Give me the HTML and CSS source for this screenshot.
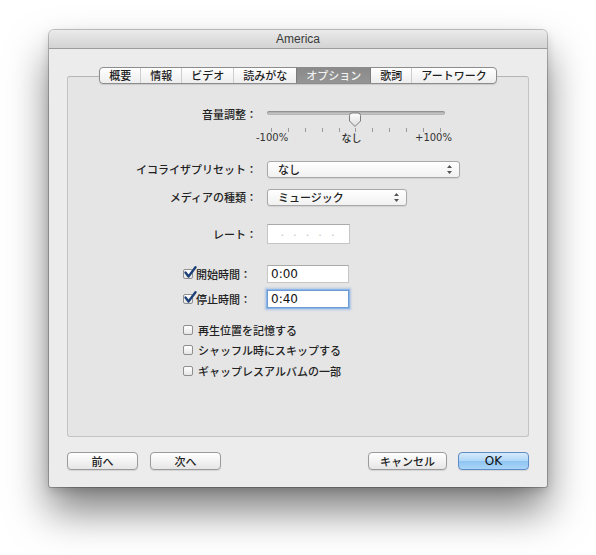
FILE: index.html
```html
<!DOCTYPE html>
<html lang="ja">
<head>
<meta charset="utf-8">
<title>America</title>
<link rel="stylesheet" href="styles.css">
</head>
<body>
<div class="window">
  <div class="titlebar">America</div>
  <div class="content">
    <div class="tabs">
      <div class="tabbar">
        <span class="tab">概要</span>
        <span class="tab">情報</span>
        <span class="tab">ビデオ</span>
        <span class="tab">読みがな</span>
        <span class="tab sel">オプション</span>
        <span class="tab">歌詞</span>
        <span class="tab">アートワーク</span>
      </div>
    </div>
    <div class="group">
      <div class="row vol">
        <div class="lbl">音量調整：</div>
        <div class="slider">
          <div class="track-area">
            <div class="track"></div>
            <svg class="thumb" width="14" height="16" viewBox="0 0 14 16">
              <defs>
                <linearGradient id="tg" x1="0" y1="0" x2="0" y2="1">
                  <stop offset="0" stop-color="#ffffff"/>
                  <stop offset="1" stop-color="#dcdcdc"/>
                </linearGradient>
              </defs>
              <path d="M1.5 3.5 Q1.5 1 4 1 H10 Q12.5 1 12.5 3.5 V9 L7 14.5 L1.5 9 Z" fill="url(#tg)" stroke="#7d7d7d" stroke-width="1"/>
            </svg>
          </div>
          <div class="ticks">
            <i></i><i></i><i></i><i></i><i></i><i></i><i></i><i></i><i></i><i></i><i></i>
          </div>
          <div class="scale"><span>-100%</span><span class="jp">なし</span><span>+100%</span></div>
        </div>
      </div>

      <div class="row eq">
        <div class="lbl">イコライザプリセット：</div>
        <div class="popup wide"><span>なし</span>
          <svg class="arrows" width="5" height="9" viewBox="0 0 5 9"><path d="M2.5 0 L5 3 H0 Z M2.5 9 L5 6 H0 Z" fill="#555"/></svg>
        </div>
      </div>

      <div class="row media">
        <div class="lbl">メディアの種類：</div>
        <div class="popup narrow"><span>ミュージック</span>
          <svg class="arrows" width="5" height="9" viewBox="0 0 5 9"><path d="M2.5 0 L5 3 H0 Z M2.5 9 L5 6 H0 Z" fill="#555"/></svg>
        </div>
      </div>

      <div class="row rate">
        <div class="lbl">レート：</div>
        <div class="field ratefield">· · · · ·</div>
      </div>

      <div class="row start">
        <div class="lbl cbl"><span class="cb on"><svg width="14" height="13" viewBox="0 0 14 13"><path d="M2.5 6.5 L5.5 10.5 L12.5 1.2" fill="none" stroke="#1d3f78" stroke-width="2.3" stroke-linecap="round" stroke-linejoin="round"/></svg></span>開始時間：</div>
        <div class="field time">0:00</div>
      </div>

      <div class="row stop">
        <div class="lbl cbl"><span class="cb on"><svg width="14" height="13" viewBox="0 0 14 13"><path d="M2.5 6.5 L5.5 10.5 L12.5 1.2" fill="none" stroke="#1d3f78" stroke-width="2.3" stroke-linecap="round" stroke-linejoin="round"/></svg></span>停止時間：</div>
        <div class="field time focus">0:40</div>
      </div>

      <div class="check c1"><span class="cb"></span>再生位置を記憶する</div>
      <div class="check c2"><span class="cb"></span>シャッフル時にスキップする</div>
      <div class="check c3"><span class="cb"></span>ギャップレスアルバムの一部</div>
    </div>

    <div class="buttons">
      <button class="btn">前へ</button>
      <button class="btn">次へ</button>
      <span class="spacer"></span>
      <button class="btn cancel">キャンセル</button>
      <button class="btn ok">OK</button>
    </div>
  </div>
</div>
</body>
</html>
```

FILE: styles.css
```css
* { box-sizing: border-box; }
html, body { margin: 0; padding: 0; background: #ffffff; }
body {
  width: 596px;
  height: 555px;
  overflow: hidden;
  font-family: "Noto Sans CJK JP", sans-serif;
  font-size: 11px;
  color: #222;
}

.window {
  margin: 30px 0 0 49px;
  width: 498px;
  height: 457px;
  background: #ececec;
  border-radius: 5px 5px 2px 2px;
  box-shadow: 0 0 0 1px rgba(0,0,0,0.22), 0 24px 40px rgba(0,0,0,0.5), 0 4px 10px rgba(0,0,0,0.15);
  display: flex;
  flex-direction: column;
  overflow: hidden;
}

.titlebar {
  height: 19px;
  flex: none;
  background: linear-gradient(#ebebeb, #d3d3d3);
  border-bottom: 1px solid #9c9c9c;
  text-align: center;
  font: 12px/19px "Liberation Sans", sans-serif;
  color: #3a3a3a;
}

.content {
  padding: 18px 18px 0;
  display: flex;
  flex-direction: column;
}

.tabs {
  display: flex;
  justify-content: center;
  position: relative;
  z-index: 1;
  margin-bottom: -8px;
}
.tabbar {
  display: flex;
  height: 17px;
  border: 1px solid #8c8c8c;
  border-radius: 4px;
  background: linear-gradient(#ffffff, #ededed);
  overflow: hidden;
  box-shadow: 0 1px 1px rgba(0,0,0,0.12);
}
.tab {
  padding: 0 9px;
  line-height: 15px;
  border-left: 1px solid #cdcdcd;
  color: #1e1e1e;
  font-weight: 500;
}
.tab:first-child { border-left: none; }
.tab.sel {
  background: linear-gradient(#8a8a8a, #959595);
  color: #f2f2f2;
  border-left-color: #7c7c7c;
}
.tab.sel + .tab { border-left-color: #7c7c7c; }

.group {
  height: 361px;
  border: 1px solid #c3c3c3;
  border-top-color: #b5b5b5;
  border-radius: 3px;
  background: #e5e5e5;
  padding-top: 29px;
  display: flex;
  flex-direction: column;
}

.row { display: flex; align-items: center; }
.lbl {
  flex: none;
  width: 189px;
  margin-right: 10px;
  text-align: right;
  font-weight: 500;
  color: #222;
}

.vol { align-items: flex-start; height: 32px; }
.vol .lbl { line-height: 16px; }
.slider { width: 178px; }
.track-area { position: relative; height: 16px; }
.track {
  margin-top: 5px;
  height: 4px;
  border-radius: 2px;
  background: linear-gradient(#9d9d9d, #d8d8d8);
  box-shadow: inset 0 0 0 1px rgba(0,0,0,0.12);
}
.thumb { position: absolute; left: 81px; top: 1px; }
.ticks {
  margin-top: 1px;
  display: flex;
  justify-content: space-between;
  padding: 0 4px;
  height: 4px;
}
.ticks i { display: block; width: 1px; height: 4px; background: #9a9a9a; }
.scale {
  margin: 1px -7px 0 -11px;
  height: 10px;
  display: flex;
  align-items: center;
  justify-content: space-between;
  font: 10px/10px "DejaVu Sans", sans-serif;
  color: #333;
}
.scale span { display: block; height: 10px; line-height: 10px; }
.scale .jp { font-family: "Noto Sans CJK JP", sans-serif; font-weight: 500; }

.eq { margin-top: 23px; height: 17px; }
.media { margin-top: 11px; height: 17px; }
.eq .lbl, .media .lbl { line-height: 17px; }

.popup {
  height: 17px;
  border: 1px solid #a8a8a8;
  border-radius: 3px;
  background: linear-gradient(#ffffff, #f1f1f1);
  box-shadow: 0 1px 1px rgba(0,0,0,0.08);
  display: flex;
  align-items: center;
  justify-content: space-between;
  padding: 0 7px 0 10px;
  font-weight: 500;
  line-height: 15px;
}
.popup.wide { width: 193px; }
.popup.narrow { width: 140px; }

.field {
  background: #fff;
  border: 1px solid #c6c6c6;
  border-top-color: #a9a9a9;
  padding-left: 3px;
}
.rate { margin-top: 18px; height: 20px; }
.ratefield {
  width: 83px;
  height: 20px;
  text-align: center;
  color: #c4c4c4;
  line-height: 18px;
  letter-spacing: 2px;
  padding-left: 0;
}

.start { margin-top: 21px; height: 18px; }
.stop { margin-top: 7px; height: 18px; }
.start .lbl, .stop .lbl { line-height: 18px; height: 18px; }
.time {
  width: 82px;
  height: 18px;
  font: 12px/16px "DejaVu Sans", sans-serif;
  color: #111;
}
.time.focus {
  border-color: #6e9bd4;
  box-shadow: 0 0 0 1px #8db6e8, 0 0 2px 2px rgba(110,160,225,0.45);
}

.cbl {
  text-align: left;
  padding-left: 115px;
  display: flex;
  align-items: center;
}

.cb {
  position: relative;
  flex: none;
  display: inline-block;
  width: 10px;
  height: 10px;
  border: 1px solid #8f8f8f;
  border-radius: 2px;
  background: linear-gradient(#ffffff, #e6e6e6);
  margin-right: 3px;
}
.cb svg { position: absolute; left: -1px; top: -4px; }

.check {
  display: flex;
  align-items: center;
  height: 16px;
  line-height: 16px;
  padding-left: 115px;
  font-weight: 500;
  color: #222;
}
.check .cb { margin-right: 5px; }
.c1 { margin-top: 14px; }
.c2 { margin-top: 4px; }
.c3 { margin-top: 5px; }

.buttons {
  margin-top: 15px;
  display: flex;
  align-items: center;
}
.spacer { flex: 1; }
.btn {
  height: 18px;
  width: 71px;
  padding: 0;
  border: 1px solid #9b9b9b;
  border-radius: 4px;
  background: linear-gradient(#ffffff, #f0f0f0 60%, #e6e6e6);
  box-shadow: 0 1px 1px rgba(0,0,0,0.1);
  font: 500 11px/16px "Noto Sans CJK JP", sans-serif;
  color: #222;
}
.btn + .btn { margin-left: 12px; }
.spacer + .btn { margin-left: 0; }
.btn.cancel { width: 79px; }
.btn.ok {
  margin-left: 11px;
  border-color: #5d8cc6;
  background: linear-gradient(#d6eafc, #b0d6f7 50%, #8ec4f2 51%, #a9d4f7);
  font: 12px/16px "DejaVu Sans", sans-serif;
  color: #111;
}
```
